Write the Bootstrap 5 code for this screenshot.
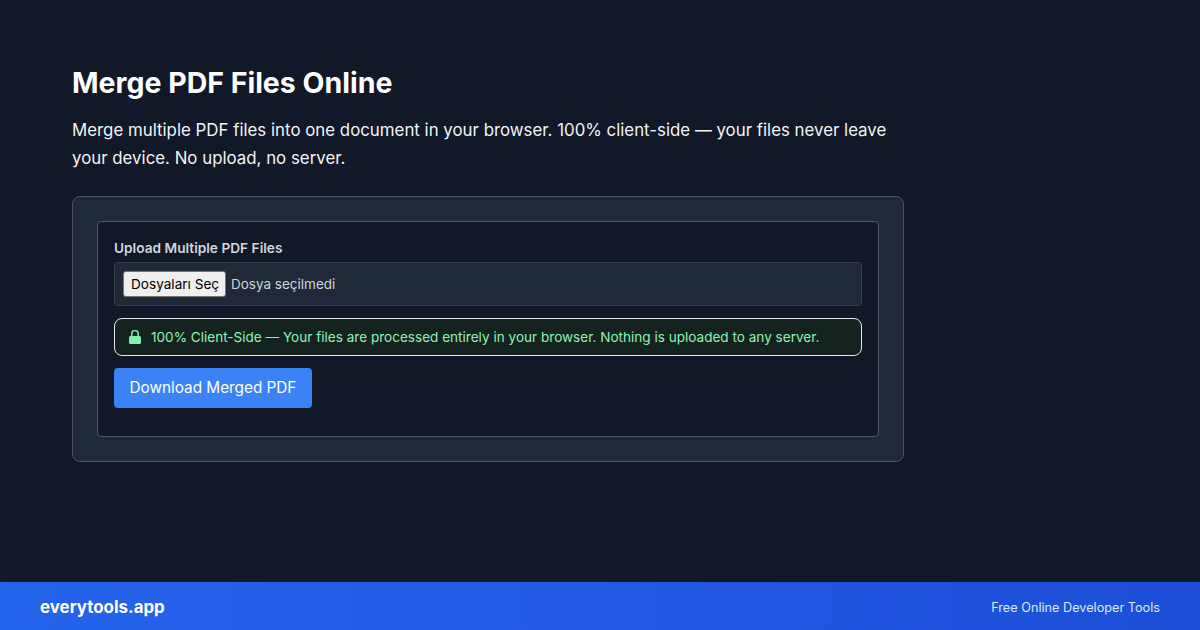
<!DOCTYPE html>
<html lang="en"><head><meta charset="utf-8">
<link href="https://cdn.jsdelivr.net/npm/bootstrap@5.3.0/dist/css/bootstrap.min.css" rel="stylesheet">
<style>
html,body{height:630px;overflow:hidden}
body{background:#111827;font-family:Inter,sans-serif;color:#fff}
.pg{height:582px;padding:64px 72px 0}
.ttl{font-size:28.5px;font-weight:700;line-height:38px;margin:0 0 14px;color:#fff}
.sub{font-size:16.85px;line-height:28px;color:#f3f4f6;width:832px;margin:0 0 24px}
.outer{width:832px;height:266px;background:#1f2937;border:1px solid #4b5563;border-radius:8px;padding:24px}
.inner{background:#111827;border:1px solid #4b5563;border-radius:4px;height:216px;padding:16px}
.lbl{font-size:13.7px;font-weight:600;color:#d1d5db;line-height:20px;margin-bottom:4px}
.filebox{background:#1f2937;border:1px solid #374151;border-radius:4px;height:44px;padding:8px;font-size:13.5px;color:#d1d5db;margin-bottom:12px}
.filebtn{background:#efefef;border:1px solid #767676;border-radius:3px;color:#000;padding:1px 7px;height:26px;font:13.6px Inter,sans-serif;margin-right:5px;width:103px;white-space:nowrap}
.note{height:38px;background:#14231f;border:1px solid #e5e7eb;border-radius:8px;padding:0 14px;font-size:13.57px;color:#8cf3b2;gap:10px;margin-bottom:12px}
.dl{background:#3b82f6;border:0;border-radius:4px;color:#fff;font-size:15.3px;font-weight:400;height:40px;width:198px;padding:1px 0 0}
.dl:hover{background:#3b82f6;color:#fff}
.foot{height:48px;background:linear-gradient(90deg,#2563eb,#1d4ed8);padding:3px 40px 0}
.brand{font-size:16.9px;font-weight:700}
.tag{font-size:12.7px;font-weight:400;color:#dbeafe}
</style></head><body>
<div class="pg">
<h1 class="ttl">Merge PDF Files Online</h1>
<p class="sub">Merge multiple PDF files into one document in your browser. 100% client-side — your files never leave your device. No upload, no server.</p>
<div class="outer"><div class="inner">
<div class="lbl">Upload Multiple PDF Files</div>
<div class="filebox d-flex align-items-center"><button class="filebtn">Dosyaları Seç</button><span>Dosya seçilmedi</span></div>
<div class="note d-flex align-items-center"><svg width="12" height="14" viewBox="0 0 12 14"><path d="M2.8 6.5V3.8a3.2 3.2 0 0 1 6.4 0V6.5" fill="none" stroke="#86efac" stroke-width="1.5"/><rect x="0" y="6" width="12" height="8" rx="1.5" fill="#86efac"/></svg><span>100% Client-Side — Your files are processed entirely in your browser. Nothing is uploaded to any server.</span></div>
<button class="dl btn">Download Merged PDF</button>
</div></div>
</div>
<div class="foot d-flex justify-content-between align-items-center"><span class="brand">everytools.app</span><span class="tag">Free Online Developer Tools</span></div>
<script src="https://cdn.jsdelivr.net/npm/bootstrap@5.3.0/dist/js/bootstrap.bundle.min.js"></script>
</body></html>
